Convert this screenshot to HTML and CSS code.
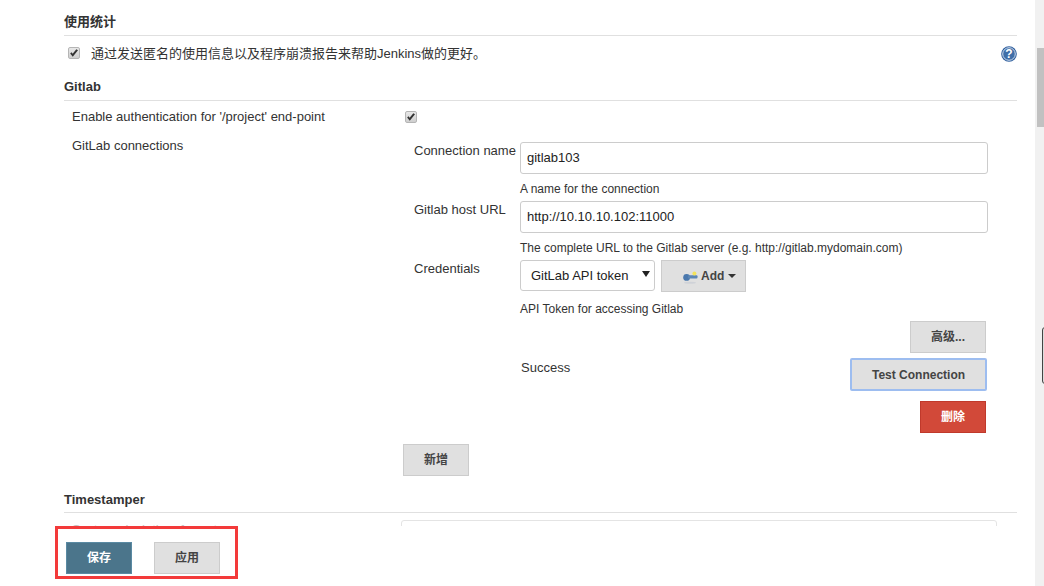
FILE: index.html
```html
<!DOCTYPE html>
<html lang="zh">
<head>
<meta charset="utf-8">
<title>Configure</title>
<link rel="stylesheet" href="styles.css">
</head>
<body>
<main class="form">
  <h2 class="heading first">使用统计</h2>
  <div class="usage">
    <span class="check usage-check"><svg viewBox="0 0 12 12" width="10" height="10"><path d="M1.4 6.6 4.5 10.4 10.8 2.8 8.8 1.4 4.4 7 3 5z" fill="#333"/></svg></span>
    <span class="usage-text">通过发送匿名的使用信息以及程序崩溃报告来帮助Jenkins做的更好。</span>
    <svg class="help" viewBox="0 0 16 16" width="16" height="16">
      <circle cx="8" cy="8" r="7.8" fill="#2f5f9e"/>
      <circle cx="8" cy="8" r="6.3" fill="#3f6ea8" stroke="#dfe8f3" stroke-width="0.9"/>
      <text x="8" y="12.2" text-anchor="middle" class="help-mark">?</text>
    </svg>
  </div>

  <h2 class="heading gitlab">Gitlab</h2>
  <div class="row auth">
    <span class="label">Enable authentication for '/project' end-point</span>
    <span class="check"><svg viewBox="0 0 12 12" width="10" height="10"><path d="M1.4 6.6 4.5 10.4 10.8 2.8 8.8 1.4 4.4 7 3 5z" fill="#333"/></svg></span>
  </div>

  <div class="row connections">
    <span class="label conn-label">GitLab connections</span>
    <div class="conn-body">
      <div class="conn-form">
        <label class="field-label">Connection name</label>
        <div class="field">
          <input class="text-input" type="text" value="gitlab103">
          <div class="hint">A name for the connection</div>
        </div>

        <label class="field-label">Gitlab host URL</label>
        <div class="field">
          <input class="text-input" type="text" value="http://10.10.10.102:11000">
          <div class="hint">The complete URL to the Gitlab server (e.g. http://gitlab.mydomain.com)</div>
        </div>

        <label class="field-label">Credentials</label>
        <div class="field">
          <div class="cred-controls">
            <span class="select-wrap">
              <select class="select"><option>GitLab API token</option></select>
            </span>
            <button class="btn add" type="button">
              <svg class="key" viewBox="0 0 15 13" width="15" height="13">
                <ellipse cx="7" cy="11.8" rx="6" ry="1" fill="#cfd2d8"/>
                <circle cx="3.6" cy="6.4" r="3.4" fill="#4a78ad"/>
                <rect x="5" y="4.2" width="9.5" height="3.4" rx="1" fill="#5b86b5"/>
                <circle cx="11.4" cy="2.4" r="2" fill="#f3e35a"/>
              </svg>
              <span>Add</span><span class="caret"></span>
            </button>
          </div>
          <div class="hint token-hint">API Token for accessing Gitlab</div>
        </div>
      </div>

      <div class="actions">
        <div class="action-row advanced"><button class="btn adv" type="button">高级...</button></div>
        <div class="action-row test">
          <span class="success">Success</span>
          <button class="btn test-btn" type="button">Test Connection</button>
        </div>
        <div class="action-row remove"><button class="btn danger" type="button">删除</button></div>
      </div>

      <button class="btn new" type="button">新增</button>
    </div>
  </div>

  <h2 class="heading stamper">Timestamper</h2>
  <div class="row clock">
    <span class="label">System clock time format</span>
    <input class="text-input clock-input" type="text">
  </div>
</main>

<footer class="savebar">
  <div class="savebox">
    <button class="btn save" type="button">保存</button>
    <button class="btn apply" type="button">应用</button>
  </div>
</footer>

<div class="scrollbar"><div class="thumb"></div></div>
<div class="side-tab"></div>
</body>
</html>
```
FILE: styles.css
```css
* { box-sizing: border-box; }

html, body {
  margin: 0;
  height: 100%;
  overflow: hidden;
  background: #fff;
}

body {
  position: relative;
  font-family: "Liberation Sans", Arial, "Noto Sans CJK SC", sans-serif;
  font-size: 13px;
  line-height: 18px;
  color: #333;
}

.form {
  width: 953px;
  margin-left: 64px;
}

.heading {
  margin: 0;
  font-size: 13px;
  font-weight: bold;
  line-height: 18px;
  padding-bottom: 4px;
  border-bottom: 1px solid #e0e0e0;
  height: 23px;
}
.heading.first { margin-top: 13px; }
.heading.gitlab { margin-top: 6px; }
.heading.stamper {
  margin-top: 15px;
  height: 22px;
  padding-bottom: 3px;
}

.usage {
  display: flex;
  align-items: center;
  height: 36px;
  padding-left: 4px;
}
.usage-text { margin-left: 11px; flex: 1; }
.usage-check { margin-top: -3px; }
.help { flex: none; }
.help-mark {
  font: bold 12px "Liberation Sans", Arial, sans-serif;
  fill: #fff;
}

.check {
  flex: none;
  display: inline-flex;
  align-items: center;
  justify-content: center;
  width: 12px;
  height: 12px;
  border: 1px solid #b5b5b5;
  border-radius: 2px;
  background: linear-gradient(#e8e8e8, #cfcfcf);
}
.check svg { flex: none; }

.row {
  display: grid;
  grid-template-columns: 329px 1fr;
  padding-left: 8px;
}
.auth {
  height: 30px;
  padding-top: 2px;
  align-items: center;
}
.auth .label { margin-top: -1px; }
.auth .check { margin-left: 4px; }

.conn-label { padding-top: 6px; }
.conn-body { padding-top: 11px; }

.conn-form {
  display: grid;
  grid-template-columns: 119px 468px;
}
.field-label {
  padding-left: 13px;
  white-space: nowrap;
}
.field { min-width: 0; }

.text-input {
  display: block;
  width: 100%;
  height: 32px;
  padding: 0 6px 2px;
  border: 1px solid #ccc;
  border-radius: 3px;
  background: #fff;
  font: inherit;
  font-size: 13px;
  color: #222;
}

.hint {
  margin-top: 7px;
  margin-bottom: 4px;
  font-size: 12px;
  line-height: 16px;
}
.token-hint { margin-top: 9px; margin-bottom: 4px; }

.cred-controls {
  display: flex;
  gap: 6px;
  align-items: flex-start;
}
.select-wrap {
  position: relative;
  display: block;
  width: 135px;
  height: 31px;
}
.select-wrap::after {
  content: "";
  position: absolute;
  right: 5px;
  top: 11px;
  border-left: 4px solid transparent;
  border-right: 4px solid transparent;
  border-top: 6px solid #222;
}
.select {
  appearance: none;
  width: 100%;
  height: 100%;
  padding: 0 0 0 10px;
  border: 1px solid #ccc;
  border-radius: 3px;
  background: #fff;
  font: inherit;
  color: #222;
}

.btn {
  display: inline-flex;
  align-items: center;
  justify-content: center;
  height: 32px;
  width: 66px;
  padding: 0;
  border: 1px solid #ccc;
  border-radius: 0;
  background: #e0e0e0;
  color: #444;
  font: inherit;
  font-size: 12px;
  font-weight: bold;
}

.add {
  width: 85px;
  padding-left: 21px;
  justify-content: flex-start;
}
.key { margin-right: 3px; margin-top: 2px; }
.caret {
  margin-left: 4px;
  border-left: 4px solid transparent;
  border-right: 4px solid transparent;
  border-top: 4px solid #333;
}

.actions { width: 585px; }
.action-row {
  display: flex;
  justify-content: flex-end;
}
.adv { width: 76px; }
.action-row.test {
  justify-content: space-between;
  margin-top: 5px;
  margin-left: 120px;
  margin-right: -1px;
}
.success { line-height: 18px; padding-top: 1px; }
.test-btn {
  width: 137px;
  height: 33px;
  border: 2px solid #9dbdf0;
  border-radius: 2px;
}
.action-row.remove { margin-top: 10px; }
.danger {
  background: #d24939;
  border-color: #c0392b;
  color: #fff;
}
.new {
  margin-top: 11px;
  margin-left: 2px;
}

.clock {
  padding-top: 7px;
  align-items: start;
}
.clock-input {
  width: 596px;
  height: 32px;
  border-color: #e4e4e4;
}
.clock .label { color: #c4c4c4; margin-top: 1px; }

.savebar {
  position: absolute;
  left: 0;
  right: 9px;
  bottom: 0;
  height: 60px;
  background: #fff;
}
.savebox {
  position: absolute;
  left: 55px;
  top: 0;
  width: 183px;
  height: 53px;
  border: 3px solid #f33a3a;
  display: flex;
  gap: 22px;
  padding: 13px 0 0 8px;
}
.save {
  background: #4b758b;
  border-color: #5a8aa3;
  color: #fff;
}

.scrollbar {
  position: absolute;
  top: 0;
  right: 0;
  bottom: 0;
  width: 9px;
  background: #f1f1f1;
}
.thumb {
  width: 7px;
  height: 79px;
  margin: 48px 0 0 2px;
  background: #c1c1c1;
}
.side-tab {
  position: absolute;
  left: 1042px;
  top: 327px;
  width: 4px;
  height: 57px;
  border: 1px solid #444;
  border-radius: 3px 0 0 3px;
  background: #ddd;
}
```
